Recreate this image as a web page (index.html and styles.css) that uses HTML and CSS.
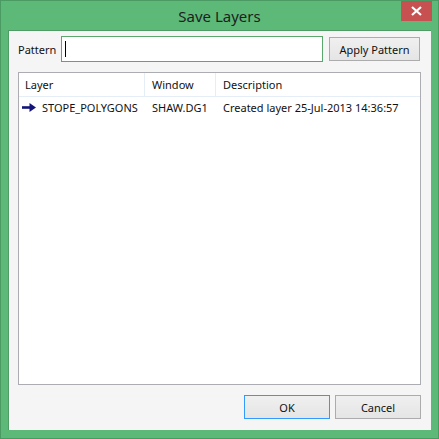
FILE: index.html
```html
<!DOCTYPE html>
<html lang="en">
<head>
    <meta charset="UTF-8">
    <title>Save Layers</title>
    <link rel="stylesheet" href="styles.css">
</head>
<body>
    <div class="window">
        <header class="titlebar">
            <span class="title">Save Layers</span>
            <button class="close-btn" aria-label="Close">
                <svg width="11" height="10" viewBox="0 0 11 10">
                    <path d="M1 1 L10 9 M10 1 L1 9" stroke="#fff" stroke-width="2.2" fill="none"/>
                </svg>
            </button>
        </header>

        <div class="client">
            <!-- Pattern filter -->
            <div class="pattern-row">
                <label class="pattern-label">Pattern</label>
                <div class="pattern-input"><span class="caret"></span></div>
                <button class="btn btn-apply">Apply Pattern</button>
            </div>

            <!-- Layer list -->
            <div class="list">
                <div class="list-header">
                    <div class="col col-layer">Layer</div>
                    <div class="col col-window">Window</div>
                    <div class="col col-desc">Description</div>
                </div>
                <div class="list-row">
                    <div class="col col-layer">
                        <svg class="arrow" width="14" height="9" viewBox="0 0 14 9">
                            <path d="M0 4.5 H9" stroke="#14147a" stroke-width="2.6"/>
                            <path d="M7.5 0 L14 4.5 L7.5 9 Z" fill="#14147a"/>
                        </svg>
                        STOPE_POLYGONS
                    </div>
                    <div class="col col-window">SHAW.DG1</div>
                    <div class="col col-desc">Created layer 25-Jul-2013 14:36:57</div>
                </div>
            </div>

            <div class="actions">
                <button class="btn btn-default">OK</button>
                <button class="btn">Cancel</button>
            </div>
        </div>
    </div>
</body>
</html>
```

FILE: styles.css
```css
:root {
    --frame: #5cb978;
    --frame-edge: #4c9a63;
    --client: #f5f5f5;
    --text: #111;
}

* {
    margin: 0;
    padding: 0;
    box-sizing: border-box;
    font-family: 'Noto Sans', 'Open Sans', sans-serif;
}

body {
    background: var(--frame);
    width: 439px;
    height: 439px;
    overflow: hidden;
}

.window {
    width: 439px;
    height: 439px;
    background: var(--frame);
    border: 1px solid var(--frame-edge);
    display: flex;
    flex-direction: column;
}

/* Title bar */
.titlebar {
    height: 29px;
    position: relative;
    display: flex;
    align-items: center;
    justify-content: center;
}

.title {
    font-size: 15px;
    color: #1e1e1e;
    margin-top: 1px;
}

.close-btn {
    position: absolute;
    top: 0;
    right: 6px;
    width: 31px;
    height: 20px;
    border: none;
    background: #c75050;
    display: flex;
    align-items: center;
    justify-content: center;
}

/* Client area */
.client {
    margin: 0 7px 8px 7px;
    flex: 1;
    background: var(--client);
    border: 1px solid #4f9c66;
    border-width: 1px 0 0 1px;
    padding: 5px 10px 10px 9px;
    display: flex;
    flex-direction: column;
    color: var(--text);
    font-size: 11px;
}

.pattern-row {
    display: flex;
    align-items: center;
    height: 26px;
}

.pattern-label {
    width: 43px;
}

.pattern-input {
    width: 262px;
    height: 26px;
    background: white;
    border: 1px solid #5aa86c;
    padding: 4px 3px;
}

.caret {
    display: block;
    width: 1px;
    height: 16px;
    background: #000;
}

.btn {
    height: 24px;
    width: 86px;
    border: 1px solid #acacac;
    background: linear-gradient(#f0f0f0, #e5e5e5);
    font-size: 11px;
    color: var(--text);
}

.btn-apply {
    width: 91px;
    margin-left: 6px;
}

.btn-default {
    border-color: #3399ff;
}

/* List */
.list {
    margin-top: 10px;
    height: 313px;
    background: white;
    border: 1px solid #abadb3;
}

.list-header {
    display: flex;
    height: 24px;
    border-bottom: 1px solid #e5edf7;
    align-items: center;
}

.list-header .col {
    height: 100%;
    display: flex;
    align-items: center;
    border-right: 1px solid #e5edf7;
}

.list-row {
    display: flex;
    height: 21px;
    align-items: center;
}

.col {
    padding-left: 7px;
    white-space: nowrap;
}

.col-layer { width: 126px; display: flex; align-items: center; padding-left: 6px; }
.col-window { width: 71px; }
.col-desc { flex: 1; }

.list-row .col-layer { padding-left: 3px; }

.list-header .col-desc { border-right: none; }

.arrow {
    margin-right: 6px;
}

.actions {
    display: flex;
    justify-content: flex-end;
    gap: 5px;
    margin-top: 10px;
}
```
